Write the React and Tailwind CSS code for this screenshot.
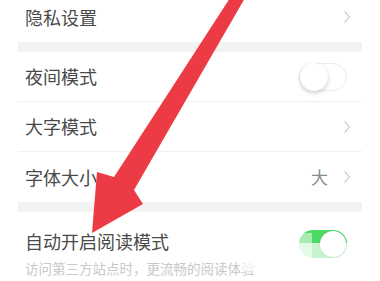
import React from 'react'

const font = { fontFamily: '"Noto Sans CJK SC", "Noto Sans", sans-serif' }

function Chevron() {
  return (
    <svg width="8" height="14" viewBox="0 0 8 14" className="shrink-0">
      <path d="M1.5 1.5 L6.5 7 L1.5 12.5" fill="none" stroke="#cfcfcf" strokeWidth="1.3" />
    </svg>
  )
}

function Toggle({ on }) {
  if (on) {
    return (
      <div className="relative w-[48px] h-[28px] rounded-full bg-[#4cd964]">
        <div className="absolute right-[1px] top-[1px] w-[26px] h-[26px] rounded-full bg-white shadow-[0_1px_3px_rgba(0,0,0,0.2)]" />
      </div>
    )
  }
  return (
    <div className="relative w-[48px] h-[28px] rounded-full bg-white border border-[#ececec]">
      <div className="absolute left-0 top-[-1px] w-[28px] h-[28px] rounded-full bg-white shadow-[0_2px_4px_rgba(0,0,0,0.2)]" />
    </div>
  )
}

function Row({ label, right, divider }) {
  return (
    <div className={`flex items-center justify-between h-[50px] pl-[7px] pr-[11px] ${divider ? 'border-b border-[#f0f0f0]' : ''}`}>
      <span className="text-[18px] text-[#4a4a4a]">{label}</span>
      {right}
    </div>
  )
}

export default function App() {
  return (
    <div className="relative w-[380px] h-[281px] overflow-hidden bg-white" style={font}>
      <div className="mx-[18px] mt-[-8px]">
        <Row label="隐私设置" right={<Chevron />} />
        <div className="h-[10px] bg-[#f3f3f3]" />
        <Row label="夜间模式" right={<div className="mr-[4px]"><Toggle /></div>} divider />
        <Row label="大字模式" right={<Chevron />} divider />
        <Row
          label="字体大小"
          right={
            <div className="flex items-center gap-[15px]">
              <span className="text-[17px] text-[#8a8a8a]">大</span>
              <Chevron />
            </div>
          }
        />
        <div className="h-[10px] bg-[#f3f3f3]" />
        <div className="flex items-start justify-between pl-[7px] pr-[15px] pt-[15px]">
          <div className="flex flex-col">
            <span className="text-[18px] leading-[28px] text-[#4a4a4a]">自动开启阅读模式</span>
            <span className="text-[13.5px] leading-[22px] text-[#c9c9c9] mt-[2px]">访问第三方站点时，更流畅的阅读体验</span>
          </div>
          <div className="mt-[3px]">
            <Toggle on />
          </div>
        </div>
      </div>

      {/* watermark */}
      <div className="absolute left-[240px] top-[243px] w-[110px] h-[28px] bg-white/70" />
      <div className="absolute left-[292px] top-[233px] w-[20px] h-[25px] bg-white/50" />

      {/* red annotation arrow */}
      <svg className="absolute left-0 top-0" width="380" height="281" viewBox="0 0 380 281">
        <polygon
          points="230,-2 245,-2 134,190 143,204 92,233 97,172 114,177"
          fill="#ec3b44"
        />
      </svg>
    </div>
  )
}
